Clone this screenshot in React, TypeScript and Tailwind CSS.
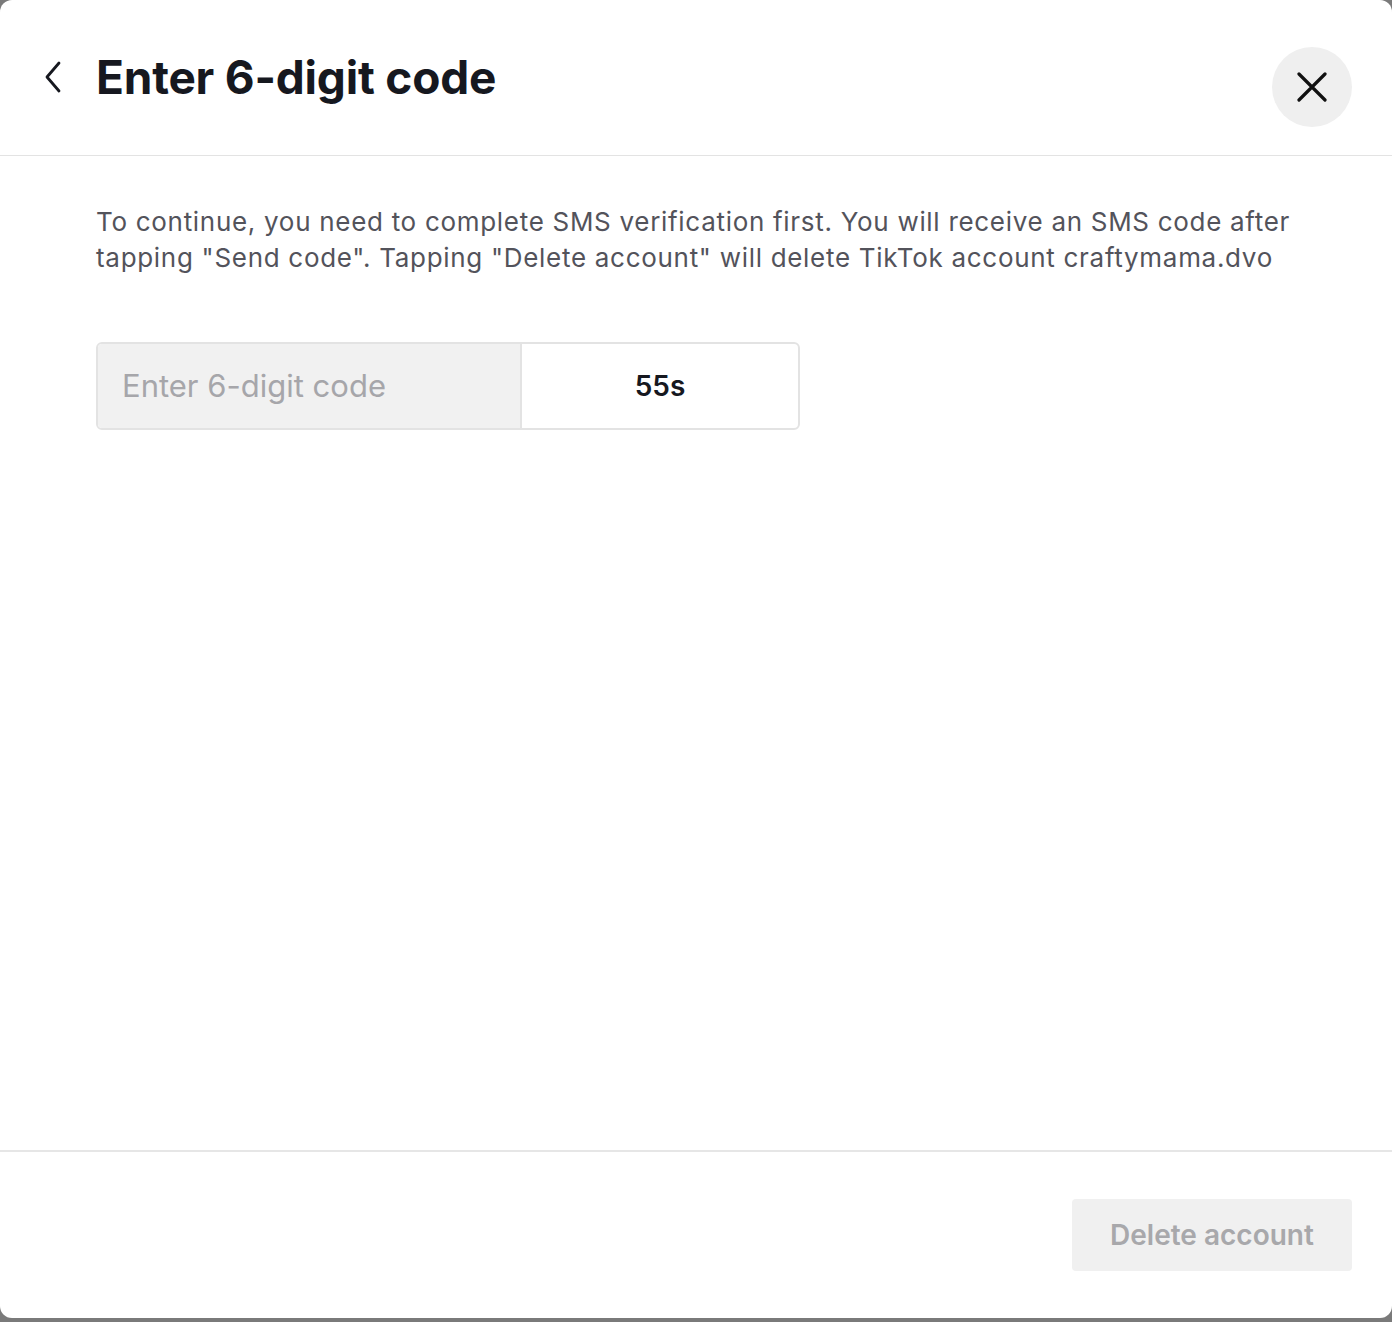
export default function App() {
  return (
    <div className="w-[1392px] h-[1322px] bg-[#7a7a7a] overflow-hidden" style={{ fontFamily: "Inter, 'Noto Sans', sans-serif" }}>
      <div className="w-full h-[1318px] bg-white rounded-[12px] flex flex-col">
        {/* header */}
        <div className="h-[156px] flex items-start justify-between pl-[45px] pr-[40px] border-b border-[#e3e3e3] shrink-0">
          <div className="flex items-center gap-[35px] mt-[48px]">
            <svg width="16" height="32" viewBox="0 0 16 32" fill="none">
              <polyline points="14,2 2,16 14,30" stroke="#16181f" strokeWidth="2.8" strokeLinecap="round" strokeLinejoin="round" />
            </svg>
            <h1 className="text-[46px] leading-[58px] font-bold text-[#16181f] tracking-[-0.2px]">Enter 6-digit code</h1>
          </div>
          <button className="mt-[47px] w-[80px] h-[80px] rounded-full bg-[#efefef] flex items-center justify-center">
            <svg width="30" height="30" viewBox="0 0 30 30" fill="none">
              <path d="M2 2 L28 28 M28 2 L2 28" stroke="#111" strokeWidth="3.2" strokeLinecap="round" />
            </svg>
          </button>
        </div>

        {/* body */}
        <div className="flex-1 px-[96px] pt-[48px]">
          <p className="text-[26px] leading-[36px] tracking-[0.7px] text-[#53535b]">
            To continue, you need to complete SMS verification first. You will receive an SMS code after tapping "Send code". Tapping "Delete account" will delete TikTok account craftymama.dvo
          </p>
          <div className="mt-[66px] w-[704px] h-[88px] flex border-2 border-[#e3e3e3] rounded-[6px] overflow-hidden">
            <div className="w-[424px] bg-[#f1f1f1] flex items-center px-[24px] border-r-2 border-[#e3e3e3]">
              <span className="text-[31px] text-[#a6a6aa]">Enter 6-digit code</span>
            </div>
            <div className="flex-1 flex items-center justify-center">
              <span className="text-[28px] font-semibold text-[#16181f]">55s</span>
            </div>
          </div>
        </div>

        {/* footer */}
        <div className="h-[168px] border-t-2 border-[#e6e6e6] flex items-start justify-end pr-[40px] pt-[47px] shrink-0">
          <button className="w-[280px] h-[72px] bg-[#f0f0f0] rounded-[4px] text-[28px] font-semibold text-[#a8a8ab]">
            Delete account
          </button>
        </div>
      </div>
    </div>
  );
}
